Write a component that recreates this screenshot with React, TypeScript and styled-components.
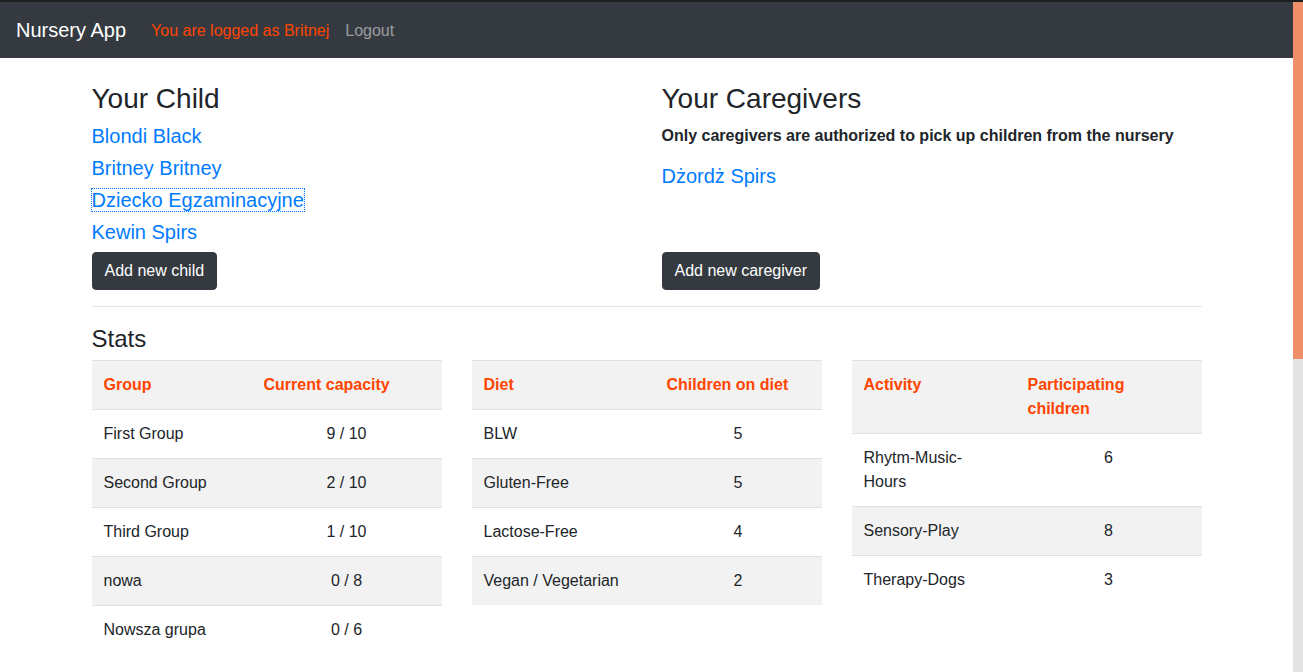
import React from "react";
import styled, { createGlobalStyle } from "styled-components";

const GlobalStyle = createGlobalStyle`
  html, body {
    margin: 0;
    padding: 0;
    height: 100%;
    overflow: hidden;
    background: #ffffff;
  }
  body {
    font-family: "Liberation Sans", Arial, Helvetica, sans-serif;
    font-size: 16px;
    line-height: 1.5;
    color: #212529;
  }
  *, *::before, *::after { box-sizing: border-box; }
`;

const Frame = styled.div`
  height: 672px;
  display: flex;
  flex-direction: row;
  border-top: 2px solid #1f1f1f;
  overflow: hidden;
`;

const Viewport = styled.div`
  flex: 1;
  min-width: 0;
  overflow: hidden;
`;

const ScrollRail = styled.div`
  width: 10px;
  flex: none;
  background: #e4e4e4;
  display: flex;
  flex-direction: column;
`;

const ScrollThumb = styled.div`
  height: 357px;
  background: #f0906a;
`;

const Navbar = styled.nav`
  display: flex;
  align-items: center;
  height: 56px;
  padding: 8px 16px;
  background: #343a40;
`;

const Brand = styled.a`
  font-size: 20px;
  line-height: 30px;
  padding: 5px 0;
  margin-right: 17px;
  color: #ffffff;
  text-decoration: none;
`;

const NavLink = styled.a<{ $accent?: boolean }>`
  padding: 9px 8px 7px;
  font-size: 16px;
  line-height: 24px;
  text-decoration: none;
  color: ${(p) => (p.$accent ? "#ff4500" : "rgba(255,255,255,0.5)")};
`;

const Container = styled.main`
  max-width: 1140px;
  margin: 24px auto 0;
  padding: 0 15px;
`;

const TopGrid = styled.section`
  display: grid;
  grid-template-columns: 1fr 1fr;
  grid-template-rows: auto auto;
  column-gap: 30px;
`;

const Column = styled.div`
  display: flex;
  flex-direction: column;
  align-items: flex-start;
`;

const Heading = styled.h3<{ $size?: number; $mb?: number }>`
  margin: 0 0 ${(p) => (p.$mb ?? 8)}px;
  font-size: ${(p) => (p.$size ?? 28)}px;
  font-weight: 500;
  line-height: 1.2;
  color: #212529;
`;

const NameItem = styled.h5`
  margin: 0 0 8px;
  font-size: 20px;
  font-weight: 400;
  line-height: 1.2;
`;

const NameLink = styled.a<{ $focused?: boolean }>`
  color: #007bff;
  text-decoration: none;
  outline: ${(p) => (p.$focused ? "1px dotted #007bff" : "none")};
`;

const Note = styled.p`
  margin: 0 0 16px;
  font-weight: 700;
  font-size: 16px;
  line-height: 24px;
`;

const DarkButton = styled.button`
  justify-self: start;
  background: #343a40;
  color: #ffffff;
  border: 1px solid #343a40;
  border-radius: 4px;
  padding: 6px 12px;
  font-family: inherit;
  font-size: 16px;
  line-height: 24px;
`;

const Divider = styled.hr`
  margin: 16px 0 18px;
  border: 0;
  border-top: 1px solid rgba(0, 0, 0, 0.1);
`;

const StatsGrid = styled.section`
  display: grid;
  grid-template-columns: repeat(3, 350px);
  column-gap: 30px;
  align-items: start;
`;

const Table = styled.table`
  width: 100%;
  border-collapse: collapse;
  table-layout: fixed;
  margin-bottom: 16px;
`;

const HeadRow = styled.tr`
  background: #f2f2f2;
`;

const Th = styled.th`
  padding: 12px;
  text-align: left;
  vertical-align: top;
  font-weight: 700;
  color: #ff4500;
  border-top: 1px solid #dee2e6;
  line-height: 24px;
`;

const Row = styled.tr`
  &:nth-child(even) { background: #f2f2f2; }
`;

const Td = styled.td<{ $center?: boolean }>`
  padding: 12px;
  vertical-align: top;
  border-top: 1px solid #dee2e6;
  line-height: 24px;
  text-align: ${(p) => (p.$center ? "center" : "left")};
`;

type StatTable = {
  heads: [string, string];
  firstCol: number;
  rows: [string, string][];
};

const stats: StatTable[] = [
  {
    heads: ["Group", "Current capacity"],
    firstCol: 160,
    rows: [
      ["First Group", "9 / 10"],
      ["Second Group", "2 / 10"],
      ["Third Group", "1 / 10"],
      ["nowa", "0 / 8"],
      ["Nowsza grupa", "0 / 6"],
    ],
  },
  {
    heads: ["Diet", "Children on diet"],
    firstCol: 183,
    rows: [
      ["BLW", "5"],
      ["Gluten-Free", "5"],
      ["Lactose-Free", "4"],
      ["Vegan / Vegetarian", "2"],
    ],
  },
  {
    heads: ["Activity", "Participating children"],
    firstCol: 164,
    rows: [
      ["Rhytm-Music-Hours", "6"],
      ["Sensory-Play", "8"],
      ["Therapy-Dogs", "3"],
    ],
  },
];

const children = ["Blondi Black", "Britney Britney", "Dziecko Egzaminacyjne", "Kewin Spirs"];

export default function App() {
  return (
    <>
      <GlobalStyle />
      <Frame>
        <Viewport>
          <Navbar>
            <Brand href="#">Nursery App</Brand>
            <NavLink $accent href="#">You are logged as Britnej</NavLink>
            <NavLink href="#">Logout</NavLink>
          </Navbar>
          <Container>
            <TopGrid>
              <Column>
                <Heading>Your Child</Heading>
                {children.map((c) => (
                  <NameItem key={c}>
                    <NameLink href="#" $focused={c === "Dziecko Egzaminacyjne"}>{c}</NameLink>
                  </NameItem>
                ))}
              </Column>
              <Column>
                <Heading>Your Caregivers</Heading>
                <Note>Only caregivers are authorized to pick up children from the nursery</Note>
                <NameItem>
                  <NameLink href="#">Dżordż Spirs</NameLink>
                </NameItem>
              </Column>
              <DarkButton>Add new child</DarkButton>
              <DarkButton>Add new caregiver</DarkButton>
            </TopGrid>
            <Divider />
            <Heading as="h4" $size={24} $mb={7}>Stats</Heading>
            <StatsGrid>
              {stats.map((t) => (
                <Table key={t.heads[0]}>
                  <colgroup>
                    <col style={{ width: t.firstCol }} />
                    <col />
                  </colgroup>
                  <thead>
                    <HeadRow>
                      <Th>{t.heads[0]}</Th>
                      <Th>{t.heads[1]}</Th>
                    </HeadRow>
                  </thead>
                  <tbody>
                    {t.rows.map((r) => (
                      <Row key={r[0]}>
                        <Td>{r[0]}</Td>
                        <Td $center>{r[1]}</Td>
                      </Row>
                    ))}
                  </tbody>
                </Table>
              ))}
            </StatsGrid>
          </Container>
        </Viewport>
        <ScrollRail>
          <ScrollThumb />
        </ScrollRail>
      </Frame>
    </>
  );
}
